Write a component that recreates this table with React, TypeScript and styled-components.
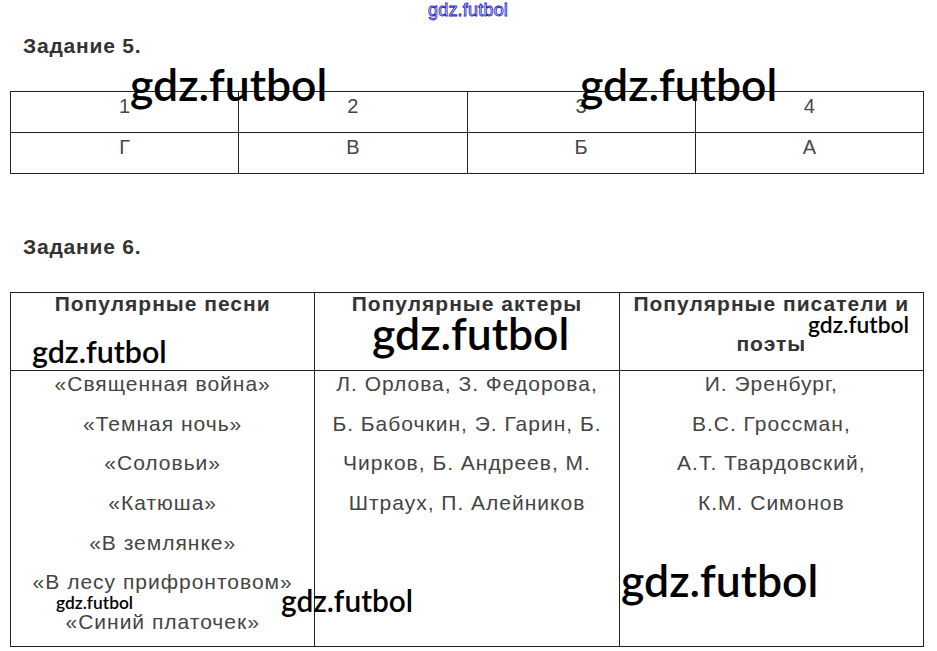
import React from "react";
import styled, { createGlobalStyle } from "styled-components";

const GlobalStyle = createGlobalStyle`
	html, body {
		margin: 0;
		padding: 0;
		background: #fff;
	}
	body {
		font-family: "Liberation Sans", Arial, sans-serif;
	}
`;

const answers = [
	{ num: "1", letter: "Г" },
	{ num: "2", letter: "В" },
	{ num: "3", letter: "Б" },
	{ num: "4", letter: "А" },
];

const columns = [
	{
		head: ["Популярные песни"],
		lines: [
			"«Священная война»",
			"«Темная ночь»",
			"«Соловьи»",
			"«Катюша»",
			"«В землянке»",
			"«В лесу прифронтовом»",
			"«Синий платочек»",
		],
	},
	{
		head: ["Популярные актеры"],
		lines: [
			"Л. Орлова, З. Федорова,",
			"Б. Бабочкин, Э. Гарин, Б.",
			"Чирков, Б. Андреев, М.",
			"Штраух, П. Алейников",
		],
	},
	{
		head: ["Популярные писатели и", "поэты"],
		lines: ["И. Эренбург,", "В.С. Гроссман,", "А.Т. Твардовский,", "К.М. Симонов"],
	},
];

// watermarks: left x, baseline y, font size
const marks = [
	{ x: 130, base: 101, size: 44.5 },
	{ x: 580, base: 101, size: 44.5 },
	{ x: 32, base: 363, size: 30.4 },
	{ x: 372, base: 350, size: 44.5 },
	{ x: 808, base: 333, size: 22.8 },
	{ x: 621, base: 597, size: 44.5 },
	{ x: 56, base: 609, size: 17.4 },
	{ x: 281, base: 612, size: 29.8 },
];

const App: React.FC = () => {
	return (
		<Page>
			<GlobalStyle />
			<TopMark>gdz.futbol</TopMark>

			<Title>Задание 5.</Title>
			<AnswerGrid>
				{answers.map((a) => (
					<AnswerCell key={a.num}>{a.num}</AnswerCell>
				))}
				{answers.map((a) => (
					<AnswerCell key={a.letter}>{a.letter}</AnswerCell>
				))}
			</AnswerGrid>

			<Title $gap>Задание 6.</Title>
			<TopicGrid>
				{columns.map((c, i) => (
					<HeadCell key={"h" + i}>
						{c.head.map((h) => (
							<span key={h}>{h}</span>
						))}
					</HeadCell>
				))}
				{columns.map((c, i) => (
					<BodyCell key={"b" + i}>
						{c.lines.map((l) => (
							<span key={l}>{l}</span>
						))}
					</BodyCell>
				))}
			</TopicGrid>

			{marks.map((m, i) => (
				<Mark key={i} $x={m.x} $y={Math.round(m.base - m.size * 0.887)} $size={m.size}>
					gdz.futbol
				</Mark>
			))}
		</Page>
	);
};

const Page = styled.div`
	position: relative;
	width: 937px;
	height: 651px;
	box-sizing: border-box;
	padding: 34px 13px 0 10px;
	overflow: hidden;
	background: #fff;
`;

const TopMark = styled.div`
	position: absolute;
	top: 1px;
	left: 428px;
	font: 400 18px/1 "Liberation Sans", Arial, sans-serif;
	letter-spacing: 0.2px;
	color: #fff;
	-webkit-text-stroke: 0.9px #2a2ad0;
`;

const Title = styled.h2<{ $gap?: boolean }>`
	margin: ${(p) => (p.$gap ? "61px" : "0")} 0 33px 13px;
	font: 700 21px/24px "Liberation Sans", Arial, sans-serif;
	letter-spacing: 0.8px;
	color: #333;
`;

//TABLE 5
const AnswerGrid = styled.div`
	display: grid;
	grid-template-columns: repeat(4, 1fr);
	border-top: 1px solid #222;
	border-left: 1px solid #222;
`;

const AnswerCell = styled.div`
	height: 40px;
	border-right: 1px solid #222;
	border-bottom: 1px solid #222;
	text-align: center;
	font-size: 20px;
	line-height: 28px;
	color: #474747;
`;

//TABLE 6
const TopicGrid = styled.div`
	display: grid;
	grid-template-columns: repeat(3, 1fr);
	grid-template-rows: 78px 276px;
	border-top: 1px solid #222;
	border-left: 1px solid #222;
`;

const HeadCell = styled.div`
	display: flex;
	flex-direction: column;
	align-items: center;
	gap: 19px;
	border-right: 1px solid #222;
	border-bottom: 1px solid #222;
	font-size: 21px;
	font-weight: 700;
	line-height: 21px;
	letter-spacing: 1px;
	color: #333;
	white-space: nowrap;
`;

const BodyCell = styled.div`
	display: flex;
	flex-direction: column;
	align-items: center;
	gap: 14.67px;
	border-right: 1px solid #222;
	border-bottom: 1px solid #222;
	font-size: 21px;
	line-height: 25px;
	letter-spacing: 1px;
	color: #444;
	white-space: nowrap;
`;

const Mark = styled.span<{ $x: number; $y: number; $size: number }>`
	position: absolute;
	left: ${(p) => p.$x}px;
	top: ${(p) => p.$y}px;
	font-family: Lato, "Noto Sans", sans-serif;
	font-weight: 600;
	font-size: ${(p) => p.$size}px;
	line-height: 1;
	color: #000;
	white-space: nowrap;
`;

export default App;
